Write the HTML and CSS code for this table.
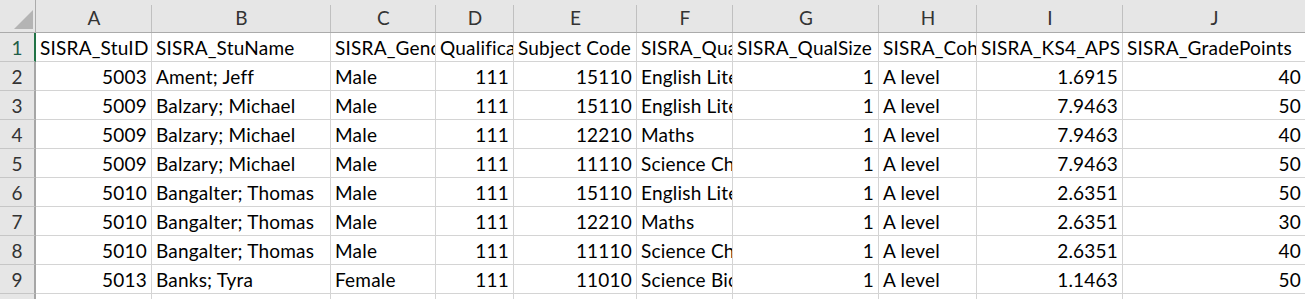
FILE: index.html
```html
<!DOCTYPE html>
<html>
<head>
<meta charset="utf-8">
<link rel="stylesheet" href="styles.css">
</head>
<body>
<div class="sheet">
  <div class="corner"><span class="tri"></span></div>
  <div class="ch">A</div><div class="ch">B</div><div class="ch">C</div><div class="ch">D</div><div class="ch">E</div>
  <div class="ch">F</div><div class="ch">G</div><div class="ch">H</div><div class="ch">I</div><div class="ch">J</div>

  <div class="rh sel">1</div>
  <div class="c">SISRA_StuID</div><div class="c">SISRA_StuName</div><div class="c">SISRA_Gender</div><div class="c">Qualification</div><div class="c">Subject Code</div>
  <div class="c">SISRA_Qualification</div><div class="c">SISRA_QualSize</div><div class="c">SISRA_Cohort</div><div class="c">SISRA_KS4_APS</div><div class="c">SISRA_GradePoints</div>

  <div class="rh">2</div>
  <div class="c n">5003</div><div class="c">Ament; Jeff</div><div class="c">Male</div><div class="c n">111</div><div class="c n">15110</div>
  <div class="c">English Literature</div><div class="c n">1</div><div class="c">A level</div><div class="c n">1.6915</div><div class="c n">40</div>

  <div class="rh">3</div>
  <div class="c n">5009</div><div class="c">Balzary; Michael</div><div class="c">Male</div><div class="c n">111</div><div class="c n">15110</div>
  <div class="c">English Literature</div><div class="c n">1</div><div class="c">A level</div><div class="c n">7.9463</div><div class="c n">50</div>

  <div class="rh">4</div>
  <div class="c n">5009</div><div class="c">Balzary; Michael</div><div class="c">Male</div><div class="c n">111</div><div class="c n">12210</div>
  <div class="c">Maths</div><div class="c n">1</div><div class="c">A level</div><div class="c n">7.9463</div><div class="c n">40</div>

  <div class="rh">5</div>
  <div class="c n">5009</div><div class="c">Balzary; Michael</div><div class="c">Male</div><div class="c n">111</div><div class="c n">11110</div>
  <div class="c">Science Chemistry</div><div class="c n">1</div><div class="c">A level</div><div class="c n">7.9463</div><div class="c n">50</div>

  <div class="rh">6</div>
  <div class="c n">5010</div><div class="c">Bangalter; Thomas</div><div class="c">Male</div><div class="c n">111</div><div class="c n">15110</div>
  <div class="c">English Literature</div><div class="c n">1</div><div class="c">A level</div><div class="c n">2.6351</div><div class="c n">50</div>

  <div class="rh">7</div>
  <div class="c n">5010</div><div class="c">Bangalter; Thomas</div><div class="c">Male</div><div class="c n">111</div><div class="c n">12210</div>
  <div class="c">Maths</div><div class="c n">1</div><div class="c">A level</div><div class="c n">2.6351</div><div class="c n">30</div>

  <div class="rh">8</div>
  <div class="c n">5010</div><div class="c">Bangalter; Thomas</div><div class="c">Male</div><div class="c n">111</div><div class="c n">11110</div>
  <div class="c">Science Chemistry</div><div class="c n">1</div><div class="c">A level</div><div class="c n">2.6351</div><div class="c n">40</div>

  <div class="rh">9</div>
  <div class="c n">5013</div><div class="c">Banks; Tyra</div><div class="c">Female</div><div class="c n">111</div><div class="c n">11010</div>
  <div class="c">Science Biology</div><div class="c n">1</div><div class="c">A level</div><div class="c n">1.1463</div><div class="c n">50</div>

  <div class="rh">10</div>
  <div class="c"></div><div class="c"></div><div class="c"></div><div class="c"></div><div class="c"></div>
  <div class="c"></div><div class="c"></div><div class="c"></div><div class="c"></div><div class="c"></div>
</div>
</body>
</html>
```

FILE: styles.css
```css
* { box-sizing: border-box; }
html, body {
  margin: 0;
  padding: 0;
  background: #ffffff;
  overflow: hidden;
}
.sheet {
  display: grid;
  grid-template-columns: 36px 116px 179px 105px 78px 123px 96px 146px 98px 146px 183px;
  grid-template-rows: 33px repeat(10, 29px);
  font-family: Lato, "Liberation Sans", sans-serif;
  font-size: 19px;
  letter-spacing: 0.2px;
  color: #000;
  width: 1306px;
}
.corner {
  background: #e6e6e6;
  border-right: 1px solid #ababab;
  border-bottom: 1px solid #ababab;
  position: relative;
}
.tri {
  position: absolute;
  right: 2px;
  bottom: 3px;
  width: 0;
  height: 0;
  border-left: 19px solid transparent;
  border-bottom: 19px solid #b4b4b4;
}
.ch {
  background: #e6e6e6;
  border-bottom: 1px solid #ababab;
  display: flex;
  align-items: flex-end;
  justify-content: center;
  padding-bottom: 3px;
  line-height: 22px;
  color: #333;
  position: relative;
}
.ch::after {
  content: "";
  position: absolute;
  right: 0;
  top: 5px;
  bottom: 0;
  width: 1px;
  background: #c0c0c0;
}
.rh {
  background: #e6e6e6;
  border-right: 2px solid #a6a6a6;
  border-bottom: 1px solid #c6c6c6;
  display: flex;
  align-items: flex-end;
  justify-content: center;
  padding-bottom: 2px;
  line-height: 22px;
  color: #333;
}
.rh.sel {
  border-right-color: #217346;
  color: #1f5d48;
}
.c {
  border-right: 1px solid #d4d4d4;
  border-bottom: 1px solid #d4d4d4;
  padding: 0 4px 2px 4px;
  line-height: 22px;
  white-space: nowrap;
  overflow: hidden;
  display: flex;
  align-items: flex-end;
}
.c.n {
  justify-content: flex-end;
}
```
